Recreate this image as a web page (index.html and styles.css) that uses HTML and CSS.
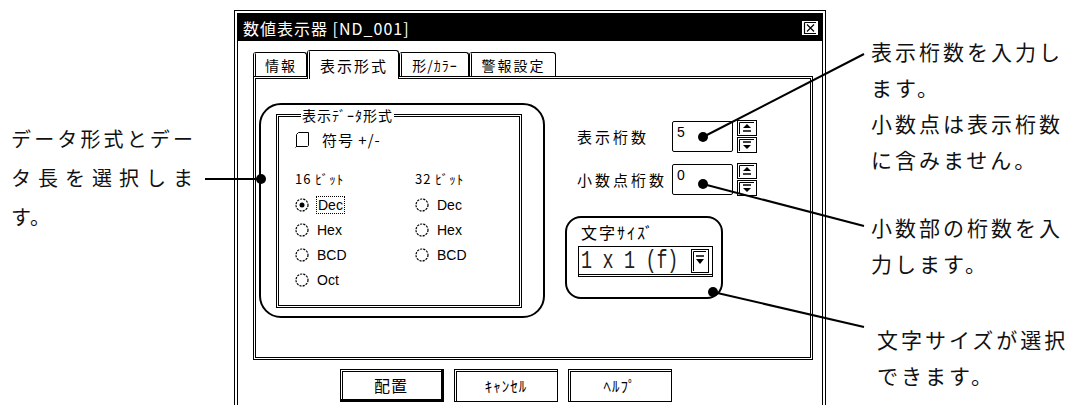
FILE: index.html
```html
<!DOCTYPE html>
<html lang="ja">
<head>
<meta charset="utf-8">
<title>数値表示器</title>
<link rel="stylesheet" href="styles.css">
</head>
<body>
<div class="note-left">
  <span class="jl">データ形式とデー</span>
  <span class="jl">タ長を選択しま</span>
  <span>す。</span>
</div>

<div class="dialog">
  <div class="frame">
    <div class="titlebar">
      <span class="title">数値表示器 [ND_001]</span>
      <svg class="close" width="16" height="14" viewBox="0 0 16 14"><rect width="16" height="14" fill="#fff"/><path d="M2.5 1.5H14M2.5 1.5V12.5H14M5 3.5L12 10.5M12 3.5L5 10.5" stroke="#000" stroke-width="1.2" fill="none"/></svg>
    </div>
    <div class="tabs">
      <div class="tab t1">情報</div>
      <div class="tab active t2">表示形式</div>
      <div class="tab t3">形/ｶﾗｰ</div>
      <div class="tab t4">警報設定</div>
    </div>
    <div class="panel">
      <div class="callout">
        <fieldset class="group">
          <legend>表示ﾃﾞｰﾀ形式</legend>
          <div class="checkrow">
            <svg width="15" height="17" viewBox="0 0 15 17"><path d="M1.5 15.5V3.5L3.5 1.5H13.5V14.5L12.5 15.5Z" fill="#fff" stroke="#000"/><path d="M0.5 16.5L2 15" stroke="#000"/></svg>
            <span>符号 +/-</span>
          </div>
          <div class="bits">
            <span class="bh">16 ﾋﾞｯﾄ</span>
            <span class="bh">32 ﾋﾞｯﾄ</span>
            <span class="radio"><svg width="14" height="14" viewBox="0 0 14 14"><circle cx="7" cy="7" r="6" fill="none" stroke="#000" stroke-width="1.2" stroke-dasharray="2.2 1"/><circle cx="7" cy="7" r="2.5" fill="#000"/></svg><span class="focus">Dec</span></span>
            <span class="radio"><svg width="14" height="14" viewBox="0 0 14 14"><circle cx="7" cy="7" r="6" fill="none" stroke="#000" stroke-width="1.2" stroke-dasharray="2.2 1"/></svg>Dec</span>
            <span class="radio"><svg width="14" height="14" viewBox="0 0 14 14"><circle cx="7" cy="7" r="6" fill="none" stroke="#000" stroke-width="1.2" stroke-dasharray="2.2 1"/></svg>Hex</span>
            <span class="radio"><svg width="14" height="14" viewBox="0 0 14 14"><circle cx="7" cy="7" r="6" fill="none" stroke="#000" stroke-width="1.2" stroke-dasharray="2.2 1"/></svg>Hex</span>
            <span class="radio"><svg width="14" height="14" viewBox="0 0 14 14"><circle cx="7" cy="7" r="6" fill="none" stroke="#000" stroke-width="1.2" stroke-dasharray="2.2 1"/></svg>BCD</span>
            <span class="radio"><svg width="14" height="14" viewBox="0 0 14 14"><circle cx="7" cy="7" r="6" fill="none" stroke="#000" stroke-width="1.2" stroke-dasharray="2.2 1"/></svg>BCD</span>
            <span class="radio"><svg width="14" height="14" viewBox="0 0 14 14"><circle cx="7" cy="7" r="6" fill="none" stroke="#000" stroke-width="1.2" stroke-dasharray="2.2 1"/></svg>Oct</span>
          </div>
        </fieldset>
      </div>
      <div class="fields">
        <div class="field">
          <span class="flabel">表示桁数</span>
          <span class="input">5</span>
          <svg class="spin" width="20" height="33" viewBox="0 0 20 33"><rect x="0.5" y="0.5" width="19" height="15" fill="#fff" stroke="#000"/><path d="M2.5 14V2.5H17" stroke="#000" fill="none"/><path d="M6 8L10 4L14 8Z" fill="#000"/><path d="M6 11H14" stroke="#000" stroke-width="1.5"/><rect x="0.5" y="17.5" width="19" height="15" fill="#fff" stroke="#000"/><path d="M2.5 31V19.5H17" stroke="#000" fill="none"/><path d="M6 22H14" stroke="#000" stroke-width="1.5"/><path d="M6 25H14L10 29Z" fill="#000"/></svg>
        </div>
        <div class="field">
          <span class="flabel">小数点桁数</span>
          <span class="input">0</span>
          <svg class="spin" width="20" height="33" viewBox="0 0 20 33"><rect x="0.5" y="0.5" width="19" height="15" fill="#fff" stroke="#000"/><path d="M2.5 14V2.5H17" stroke="#000" fill="none"/><path d="M6 8L10 4L14 8Z" fill="#000"/><path d="M6 11H14" stroke="#000" stroke-width="1.5"/><rect x="0.5" y="17.5" width="19" height="15" fill="#fff" stroke="#000"/><path d="M2.5 31V19.5H17" stroke="#000" fill="none"/><path d="M6 22H14" stroke="#000" stroke-width="1.5"/><path d="M6 25H14L10 29Z" fill="#000"/></svg>
        </div>
        <div class="callout2">
          <span class="flabel2">文字ｻｲｽﾞ</span>
          <div class="combo">
            <span class="ctext">1 x 1 (f)</span>
            <svg class="drop" width="18" height="24" viewBox="0 0 18 24"><rect x="0.5" y="0.5" width="17" height="23" fill="#fff" stroke="#000"/><path d="M2.5 22V2.5H15" stroke="#000" fill="none"/><path d="M5 7H13" stroke="#000" stroke-width="1.5"/><path d="M5 10H13L9 15Z" fill="#000"/></svg>
          </div>
        </div>
      </div>
    </div>
    <div class="buttons">
      <div class="btn default">配置</div>
      <div class="btn">ｷｬﾝｾﾙ</div>
      <div class="btn">ﾍﾙﾌﾟ</div>
    </div>
  </div>
</div>

<div class="note-right">
  <p class="n1"><span>表示桁数を入力し</span><span>ます。</span><span>小数点は表示桁数</span><span>に含みません。</span></p>
  <p class="n2"><span>小数部の桁数を入</span><span>力します。</span></p>
  <p class="n3"><span>文字サイズが選択</span><span>できます。</span></p>
</div>

<svg class="leaders" width="1070" height="405" viewBox="0 0 1070 405">
  <g stroke="#000" stroke-width="2" fill="none">
    <path d="M205 179H260"/>
    <path d="M703 137L864 54"/>
    <path d="M703 184L864 226"/>
    <path d="M713 292L864 327"/>
  </g>
  <g fill="#000">
    <circle cx="261" cy="179" r="5"/>
    <circle cx="703" cy="137" r="5"/>
    <circle cx="703" cy="184" r="5"/>
    <circle cx="713" cy="292" r="5"/>
  </g>
</svg>
</body>
</html>
```

FILE: styles.css
```css
* { box-sizing: border-box; }
html, body { margin: 0; padding: 0; background: #fff; }
body {
  width: 1070px;
  height: 405px;
  overflow: hidden;
  position: relative;
  display: flex;
  align-items: flex-start;
  font-family: "Noto Sans CJK JP", "Noto Sans", sans-serif;
  color: #000;
}

/* left annotation */
.note-left {
  width: 234px;
  padding: 119px 0 0 11px;
  font-size: 20px;
  line-height: 39px;
  letter-spacing: 1px;
  color: #111;
}
.note-left span { display: block; width: 183px; }
.note-left .jl { text-align: justify; text-align-last: justify; }

/* right annotation */
.note-right {
  flex: 1;
  padding: 33px 0 0 45px;
  font-size: 21px;
  line-height: 36px;
  letter-spacing: 3px;
  color: #111;
}
.note-right p { margin: 0; }
.note-right span { display: block; white-space: nowrap; }
.note-right .n2 { margin-top: 32px; }
.note-right .n3 { margin-top: 40px; padding-left: 6px; }

/* dialog */
.dialog {
  width: 592px;
  height: 410px;
  margin-top: 10px;
  border: 1px solid #000;
  padding: 2px;
  background: #fff;
  flex: none;
}
.frame {
  border: 1px solid #000;
  height: 100%;
  display: flex;
  flex-direction: column;
}
.titlebar {
  height: 27px;
  background: #000;
  color: #fff;
  display: flex;
  align-items: center;
  justify-content: space-between;
  padding: 0 4px 0 5px;
  font-size: 16px;
  letter-spacing: 1px;
}
.close { display: block; }

.tabs {
  display: flex;
  align-items: flex-end;
  height: 35px;
  margin-left: 15px;
}
.tab {
  height: 24px;
  border: 1px solid #000;
  border-left: 3px double #000;
  border-bottom: none;
  border-radius: 3px 3px 0 0;
  font-size: 14px;
  letter-spacing: 2px;
  display: flex;
  align-items: center;
  justify-content: center;
  background: #fff;
}
.tab.active {
  height: 29px;
  margin-bottom: -3px;
  position: relative;
  z-index: 1;
  font-size: 15px;
}
.t1 { width: 54px; }
.t2 { width: 92px; }
.t3 { width: 70px; letter-spacing: 1px; }
.t4 { width: 87px; }

.panel {
  height: 284px;
  margin: 0 9px 0 15px;
  border: 3px double #000;
  display: flex;
  align-items: flex-start;
}

.callout {
  width: 286px;
  height: 215px;
  margin: 24px 0 0 3px;
  border: 2px solid #000;
  border-radius: 22px;
  padding: 0 21px 8px 15px;
}
.group {
  height: 100%;
  margin: 0;
  padding: 0 0 0 16px;
  border: 3px double #000;
  min-width: 0;
}
.group legend {
  font-size: 14px;
  letter-spacing: 1px;
  padding: 0 1px;
  margin-left: 6px;
  line-height: 20px;
}
.checkrow {
  display: flex;
  align-items: center;
  gap: 12px;
  height: 20px;
  margin-top: 4px;
  font-size: 15px;
  letter-spacing: 1px;
}
.checkrow svg { display: block; }
.bits {
  display: grid;
  grid-template-columns: 120px 100px;
  grid-template-rows: 27px repeat(4, 25px);
  align-items: center;
  margin-top: 16px;
  font-size: 13px;
}
.bh { letter-spacing: 1px; }
.radio {
  display: flex;
  align-items: center;
  gap: 8px;
  font-family: "Liberation Sans", Arial, sans-serif;
  font-size: 14px;
}
.radio svg { display: block; flex: none; }
.focus { outline: 1px dotted #000; padding: 0 1px; }

.fields {
  margin-left: 32px;
  padding-top: 41px;
  display: flex;
  flex-direction: column;
}
.field {
  display: flex;
  align-items: center;
  height: 33px;
  margin-bottom: 10px;
}
.flabel {
  width: 95px;
  font-size: 15px;
  letter-spacing: 3px;
}
.input {
  width: 61px;
  height: 31px;
  border: 1px solid #000;
  border-radius: 2px;
  font-family: "Liberation Sans", Arial, sans-serif;
  font-size: 14px;
  padding: 1px 4px;
  line-height: 18px;
}
.spin { display: block; margin-left: 4px; }

.callout2 {
  width: 158px;
  height: 83px;
  margin: 10px 0 0 -12px;
  border: 2px solid #000;
  border-radius: 16px;
  padding: 3px 0 0 11px;
}
.flabel2 {
  display: block;
  font-size: 16px;
  letter-spacing: 2px;
  line-height: 22px;
  padding-left: 3px;
}
.combo {
  width: 135px;
  height: 31px;
  margin-top: 3px;
  border: 1px solid #000;
  border-bottom: 3px double #000;
  display: flex;
  align-items: center;
  justify-content: space-between;
  padding: 0 3px 0 2px;
}
.ctext {
  font-family: "Liberation Mono", monospace;
  font-size: 19px;
  color: #222;
  display: inline-block;
  transform: scale(0.97, 1.35);
  transform-origin: left center;
  letter-spacing: -0.3px;
  white-space: nowrap;
}
.drop { display: block; }

.buttons {
  display: flex;
  gap: 10px;
  margin-top: 9px;
  padding-left: 102px;
}
.btn {
  width: 104px;
  height: 33px;
  border: 1px solid #000;
  box-shadow: inset 2px 2px 0 -1px #fff, inset 3px 3px 0 -1px #000;
  display: flex;
  align-items: center;
  justify-content: center;
  font-size: 15px;
  letter-spacing: 1px;
}
.btn.default {
  border-right: 3px solid #000;
  border-bottom: 3px solid #000;
  font-size: 16px;
}

.leaders {
  position: absolute;
  left: 0;
  top: 0;
  pointer-events: none;
}
```
